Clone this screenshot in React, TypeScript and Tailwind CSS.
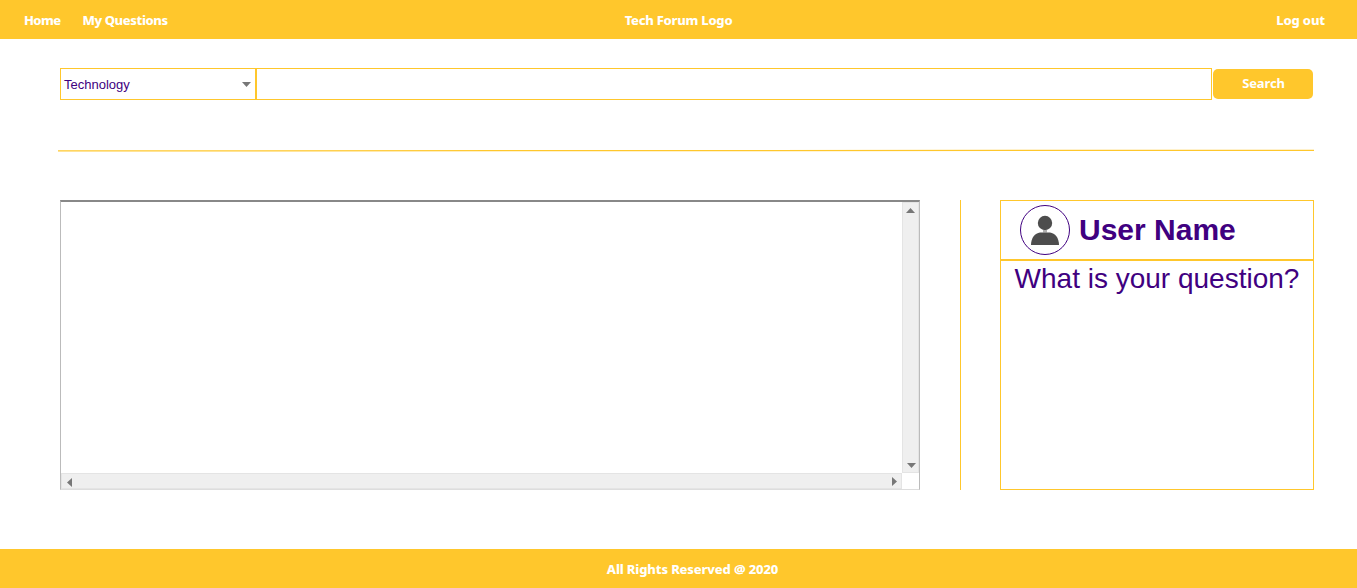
import type { ReactNode } from 'react';

function Arrow({ points, className = '' }: { points: string; className?: string }) {
  return (
    <svg width="10" height="10" viewBox="0 0 10 10" className={`shrink-0 overflow-visible fill-[#777777] ${className}`}>
      <polygon points={points} />
    </svg>
  );
}

function NavText({ children, className = '' }: { children: ReactNode; className?: string }) {
  return <span className={`whitespace-nowrap text-[13px] font-extrabold leading-5 ${className}`}>{children}</span>;
}

export default function App() {
  return (
    <div className="flex h-[588px] w-[1357px] flex-col overflow-hidden bg-white font-['Liberation_Sans',sans-serif] text-[#400080]">
      <header className="grid h-[39px] shrink-0 grid-cols-3 items-center bg-[#ffc72c] pl-6 pr-8 font-['Noto_Sans',sans-serif] text-white">
        <nav className="flex gap-[22px]">
          <NavText className="tracking-[-0.6px]">Home</NavText>
          <NavText className="tracking-[-0.4px]">My Questions</NavText>
        </nav>
        <NavText className="pl-2 text-center tracking-[-0.25px]">Tech Forum Logo</NavText>
        <NavText className="text-right tracking-[-0.15px]">Log out</NavText>
      </header>

      <form className="ml-[60px] mt-[29px] flex h-8 w-[1253px] shrink-0 items-center">
        <button type="button" className="flex h-8 w-[196px] items-center justify-between border border-[#ffc72c] pl-[3px] pr-1 text-[13px]">
          <span className="pt-0.5">Technology</span>
          <Arrow points="1,3 10,3 5.5,8" />
        </button>
        <input aria-label="Search" className="h-8 w-[956px] border border-[#ffc72c] px-2 outline-none" />
        <button type="button" className="ml-px h-[30px] w-[100px] rounded-[5px] bg-[#ffc72c] font-['Noto_Sans',sans-serif] text-[13px] font-bold leading-7 tracking-[-0.15px] text-white">
          <span className="block h-[30px] pl-px">Search</span>
        </button>
      </form>

      <svg className="ml-[58px] mt-[49px] shrink-0" width="1256" height="4" viewBox="0 0 1256 4">
        <path d="M0 1.9 L1256 1.3" stroke="#ffc72c" strokeWidth="1.3" />
      </svg>

      <main className="ml-[60px] mt-[47px] flex h-[290px] w-[1254px] shrink-0">
        <section className="grid h-[290px] w-[860px] grid-cols-[841px_17px] grid-rows-[271px_16px] border border-b-[#dddddd] border-l-[#bbbbbb] border-r-[#bbbbbb] border-t-2 border-t-[#888888]">
          <div />
          <div className="flex flex-col items-center justify-between border border-[#e4e4e4] bg-[#efefef] pb-[3px] pt-1">
            <Arrow points="0,6 4.5,1 9,6" />
            <Arrow points="1,4 10,4 5.5,9" />
          </div>
          <div className="flex items-center justify-between border border-[#e4e4e4] bg-[#efefef] pl-[3px] pr-[2px]">
            <Arrow points="7,2 2,6.5 7,11" />
            <Arrow points="3,1 8,5.5 3,10" />
          </div>
          <div />
        </section>
        <div className="ml-10 w-px bg-[#ffc72c]" />
        <aside className="ml-[39px] flex w-[314px] flex-col">
          <div className="flex h-[60px] items-center gap-[9px] border border-[#ffc72c] pl-[19px]">
            <svg width="50" height="50" viewBox="0 0 50 50">
              <circle cx="25" cy="25" r="24.5" fill="none" stroke="#400080" />
              <circle cx="25" cy="18" r="7.2" fill="#4d4d4d" />
              <path d="M23 25 H27 V27.5 H23 Z" fill="#b0b0b0" />
              <path d="M11 40 C11 33 15 28 20 27.5 H30 C35 28 39 33 39 40 Z" fill="#4d4d4d" />
            </svg>
            <h1 className="whitespace-nowrap text-[30px] font-bold leading-9">User Name</h1>
          </div>
          <div className="flex-1 border border-[#ffc72c]">
            <p className="whitespace-nowrap text-center text-[28px] leading-9">What is your question?</p>
          </div>
        </aside>
      </main>

      <footer className="mt-auto flex h-[39px] shrink-0 items-center justify-center bg-[#ffc72c] pl-7 font-['Noto_Sans',sans-serif] text-white">
        <NavText className="tracking-[-0.15px]">All Rights Reserved @ 2020</NavText>
      </footer>
    </div>
  );
}
